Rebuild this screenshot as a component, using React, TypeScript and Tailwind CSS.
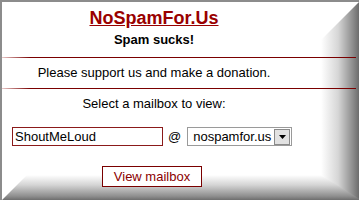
export default function App() {
  return (
    <div
      className="relative w-[359px] h-[200px] overflow-hidden bg-white border-l-2 border-t-2 border-[#8c8c8c] text-black"
      style={{ fontFamily: '"Liberation Sans", Arial, sans-serif' }}
    >
      {/* 3d bevel on right and bottom */}
      <div
        className="absolute top-0 right-0 w-[38px] h-[200px] bg-[linear-gradient(to_right,#ffffff,#d6d6d6_45%,#8a8a8a_85%,#6c6c6c)] [clip-path:polygon(0_38px,100%_0,100%_100%,0_173px)]"
      />
      <div
        className="absolute bottom-0 left-0 w-[359px] h-[25px] bg-[linear-gradient(to_bottom,#ffffff,#d4d4d4_40%,#8e8e8e_85%,#6e6e6e)] [clip-path:polygon(0_100%,25px_0,319px_0,100%_100%)]"
      />

      <div className="relative flex flex-col">
        <div className="mt-[6px] w-[304px] text-center text-[18px] leading-[21px] font-bold text-[#990000] underline decoration-[#990000]">
          NoSpamFor.Us
        </div>
        <div className="mt-[3px] w-[304px] text-center text-[13px] leading-[15px] font-bold">
          Spam sucks!
        </div>

        <div className="mt-[10px] h-px w-[354px] bg-[linear-gradient(to_right,#e8c8c8,#7a0000_8%,#7a0000)]" />

        <div className="mt-[7px] w-[304px] text-center text-[13px] leading-[15px]">
          Please support us and make a donation.
        </div>

        <div className="mt-[8px] h-px w-[354px] bg-[linear-gradient(to_right,#e8c8c8,#7a0000_8%,#7a0000)]" />

        <div className="mt-[7px] w-[304px] text-center text-[13px] leading-[15px]">
          Select a mailbox to view:
        </div>

        <div className="mt-[16px] ml-[10px] flex items-center h-[19px]">
          <div className="w-[151px] h-[19px] border border-[#8b1a1a] flex items-center pl-[2px] text-[13px] leading-[15px]">
            ShoutMeLoud
          </div>
          <span className="ml-[5px] text-[13px] leading-[15px]">@</span>
          <div className="ml-[6px] w-[105px] h-[19px] border border-[#9a9a9a] flex items-center justify-between text-[13px] leading-[15px]">
            <span className="pl-[5px]">nospamfor.us</span>
            <div className="mr-px w-[16px] h-[16px] bg-[#e2e2e2] border border-[#8a8a8a] flex items-center justify-center">
              <svg width="7" height="4" viewBox="0 0 7 4">
                <path d="M0 0h7L3.5 4z" fill="#000" />
              </svg>
            </div>
          </div>
        </div>

        <div className="mt-[20px] ml-[100px] w-[100px] h-[21px] border border-[#7a0000] bg-white flex items-center justify-center text-[13px] leading-[15px] text-[#8b0000]">
          View mailbox
        </div>
      </div>
    </div>
  );
}
